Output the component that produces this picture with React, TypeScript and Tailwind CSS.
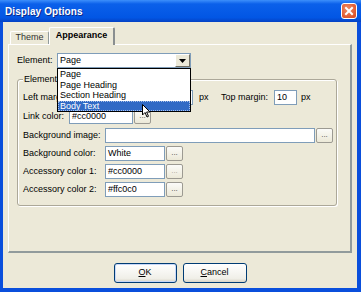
import React from 'react';

const font = "font-['Liberation_Sans',Arial,sans-serif]";

const Dots = ({ disabled = false }: { disabled?: boolean }) => (
  <div
    className={`w-[17px] h-[15px] ml-[1px] shrink-0 flex items-end justify-center pb-[3px] rounded-[2px] border border-[#9c9a92] bg-[linear-gradient(#fbfbf8,#ece9d8)] text-[8px] leading-none ${
      disabled ? 'text-[#a9a797]' : 'text-[#444]'
    }`}
  >
    ...
  </div>
);

const Input = ({ w, value = '' }: { w: string; value?: string }) => (
  <div className={`${w} h-[15px] shrink-0 bg-white border border-[#7f9db9] px-[2px] text-[9px] leading-[13px] text-black overflow-hidden whitespace-nowrap`}>
    {value}
  </div>
);

const colorRows = [
  { label: 'Background color:', value: 'White' },
  { label: 'Accessory color 1:', value: '#cc0000' },
  { label: 'Accessory color 2:', value: '#ffc0c0' },
];

const options = ['Page', 'Page Heading', 'Section Heading', 'Body Text'];

export default function App() {
  return (
    <div className={`w-[361px] h-[292px] flex flex-col bg-[#0a4fdc] ${font} select-none`}>
      {/* Title bar */}
      <div className="h-[22px] shrink-0 flex items-center justify-between pl-[5px] pr-[4px] bg-[linear-gradient(#3d8ffb,#0b60ea_18%,#0256e4_80%,#0442c4)]">
        <span className="text-white font-bold text-[10px] tracking-[0.1px] [text-shadow:1px_1px_0_#0a2a8a]">
          Display Options
        </span>
        <div className="w-[16px] h-[16px] rounded-[3px] border border-white bg-[radial-gradient(circle_at_40%_35%,#f08a62,#d9461c)] flex items-center justify-center">
          <svg width="10" height="10" viewBox="0 0 10 10">
            <path d="M2 2 L8 8 M8 2 L2 8" stroke="white" strokeWidth="2" strokeLinecap="square" />
          </svg>
        </div>
      </div>

      {/* Body */}
      <div className="flex-1 ml-[3px] mr-[4px] mb-[4px] bg-[#ece9d8] flex flex-col px-[5px] pt-[5px] text-black">
        {/* Tabs */}
        <div className="h-[17px] flex items-end pl-[2px] relative z-10">
          <div className="h-[13px] w-[39px] border-t border-l border-white border-r border-r-[#919b9c] rounded-t-[2px] text-[9px] text-[#333] flex items-center justify-center">
            Theme
          </div>
          <div className="h-[18px] -mb-[1px] w-[66px] border-t border-l border-white border-r-2 border-r-[#8a8f90] rounded-t-[2px] bg-[#ece9d8] text-[9px] font-bold flex items-center justify-center pb-[2px]">
            Appearance
          </div>
        </div>

        {/* Panel */}
        <div className="h-[209px] border border-white border-r-2 border-b-2 border-r-[#919b9c] border-b-[#919b9c] px-[8px] pt-[8px]">
          {/* Element select */}
          <div className="flex items-center h-[15px] text-[9px]">
            <span className="w-[40px] shrink-0">Element:</span>
            <div className="relative w-[134px] h-[15px] z-20">
              <div className="h-full bg-white border border-[#7f9db9] flex items-center justify-between pl-[2px]">
                <span className="text-[9px]">Page</span>
                <div className="w-[15px] h-[13px] bg-[#ece9d8] border border-white border-r-[#716f64] border-b-[#716f64] flex items-center justify-center">
                  <svg width="7" height="4" viewBox="0 0 7 4">
                    <path d="M0 0 H7 L3.5 4 Z" fill="black" />
                  </svg>
                </div>
              </div>
              {/* Open list */}
              <div className="absolute left-0 top-full w-full border border-black bg-white flex flex-col">
                {options.map((o, i) => (
                  <div
                    key={o}
                    className={`h-[10.5px] text-[9px] leading-[10px] pl-[2px] ${
                      i === 3 ? 'bg-[#316ac5] text-white outline outline-1 outline-dotted outline-[#a8c0e8] -outline-offset-1' : ''
                    }`}
                  >
                    {o}
                  </div>
                ))}
                {/* mouse pointer */}
                <svg className="absolute left-[84px] top-[35px]" width="9" height="14" viewBox="0 0 9 14">
                  <path d="M0.5 0.5 V11 L3 8.5 L5 13 L6.5 12.3 L4.6 8 H8 Z" fill="white" stroke="black" strokeWidth="1" />
                </svg>
              </div>
            </div>
          </div>

          {/* Group box */}
          <div className="relative mt-[11px] h-[127px] w-[320px] border border-[#aca899] rounded-[3px] shadow-[1px_1px_0_#fff,inset_1px_1px_0_#fff] pl-[5px] pt-[10px] text-[9px]">
            <span className="absolute -top-[7px] left-[5px] px-[1px] bg-[#ece9d8]">Element</span>

            <div className="flex flex-col gap-[3px]">
              <div className="flex items-center h-[15px]">
                <span className="w-[146px] shrink-0">Left margin:</span>
                <Input w="w-[24px]" value="10" />
                <span className="ml-[6px] w-[22px] shrink-0">px</span>
                <span className="w-[53px] shrink-0">Top margin:</span>
                <Input w="w-[23px]" value="10" />
                <span className="ml-[4px]">px</span>
              </div>
              <div className="flex items-center h-[15px] mt-[1px]">
                <span className="w-[46px] shrink-0">Link color:</span>
                <Input w="w-[64px]" value="#cc0000" />
                <Dots />
              </div>
              <div className="flex items-center h-[15px] mt-[1px]">
                <span className="w-[82px] shrink-0">Background image:</span>
                <Input w="w-[210px]" />
                <Dots />
              </div>
              {colorRows.map((r, i) => (
                <div key={r.label} className="flex items-center h-[15px]">
                  <span className="w-[82px] shrink-0">{r.label}</span>
                  <Input w="w-[60px]" value={r.value} />
                  <Dots disabled={i === 1} />
                </div>
              ))}
            </div>
          </div>
        </div>

        {/* Buttons */}
        <div className="flex justify-center gap-[6px] mt-[10px]">
          <button className="w-[63px] h-[20px] rounded-[3px] border border-[#003c74] bg-[linear-gradient(#ffffff,#f0efe8_80%,#d8d5c8)] text-[9px] shadow-[inset_0_0_0_1px_#c8d8f8]">
            <span className="underline">O</span>K
          </button>
          <button className="w-[64px] h-[20px] rounded-[3px] border border-[#003c74] bg-[linear-gradient(#ffffff,#f0efe8_80%,#d8d5c8)] text-[9px]">
            <span className="underline">C</span>ancel
          </button>
        </div>
      </div>
    </div>
  );
}
